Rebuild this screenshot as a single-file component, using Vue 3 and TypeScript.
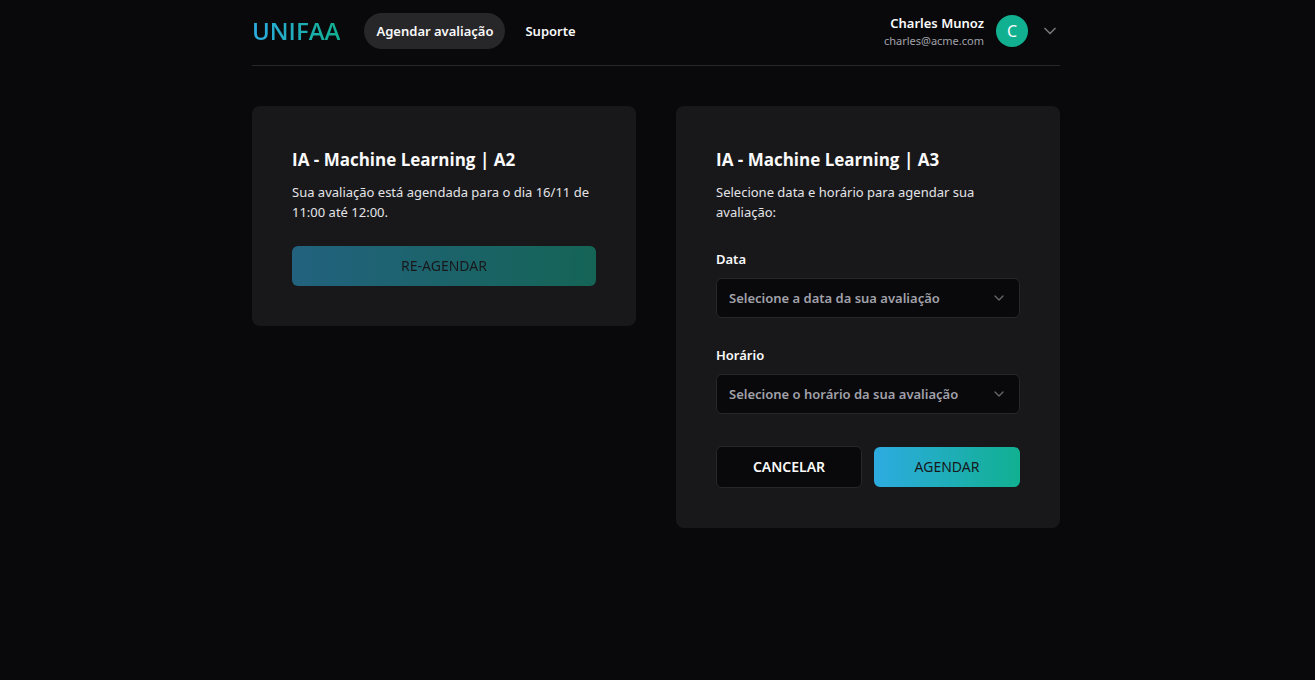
<script setup lang="ts">
import { ref } from 'vue'

interface SelectField {
  id: string
  label: string
  placeholder: string
  options: string[]
}

const fields: SelectField[] = [
  { id: 'data', label: 'Data', placeholder: 'Selecione a data da sua avaliação', options: [] },
  { id: 'horario', label: 'Horário', placeholder: 'Selecione o horário da sua avaliação', options: [] },
]

const selected = ref<Record<string, string>>({ data: '', horario: '' })
</script>

<template>
  <div class="page">
    <div class="container">
      <header class="header">
        <a class="logo" href="#">UNIFAA</a>
        <nav class="nav">
          <a class="nav-link active" href="#agendar">Agendar avaliação</a>
          <a class="nav-link" href="#suporte">Suporte</a>
        </nav>
        <button class="user" type="button">
          <span class="user-text">
            <span class="user-name">Charles Munoz</span>
            <span class="user-mail">charles@acme.com</span>
          </span>
          <span class="avatar">C</span>
          <svg class="user-chevron" viewBox="0 0 24 24" aria-hidden="true"><path d="m6 9 6 6 6-6" /></svg>
        </button>
      </header>

      <main class="cards">
        <section class="card">
          <h2 class="title">IA - Machine Learning | A2</h2>
          <p class="text">Sua avaliação está agendada para o dia 16/11 de 11:00 até 12:00.</p>
          <button class="btn primary" type="button" disabled>RE-AGENDAR</button>
        </section>

        <section class="card">
          <h2 class="title">IA - Machine Learning | A3</h2>
          <p class="text">Selecione data e horário para agendar sua avaliação:</p>
          <form class="form" @submit.prevent>
            <div v-for="field in fields" :key="field.id" class="field">
              <label class="label" :for="field.id">{{ field.label }}</label>
              <div class="select-wrap">
                <select :id="field.id" v-model="selected[field.id]" class="select">
                  <option value="" disabled>{{ field.placeholder }}</option>
                  <option v-for="option in field.options" :key="option" :value="option">{{ option }}</option>
                </select>
                <svg class="select-chevron" viewBox="0 0 24 24" aria-hidden="true"><path d="m6 9 6 6 6-6" /></svg>
              </div>
            </div>
            <div class="actions">
              <button class="btn outline" type="button">CANCELAR</button>
              <button class="btn primary" type="submit">AGENDAR</button>
            </div>
          </form>
        </section>
      </main>
    </div>
  </div>
</template>

<style>
body {
  background: #09090b;
}
</style>

<style scoped>
.page,
.page * {
  box-sizing: border-box;
}

.page {
  min-height: 100vh;
  padding-right: 3px;
  background: #09090b;
  color: #fafafa;
  font-family: "Segoe UI", "Noto Sans", "Open Sans", sans-serif;
  font-size: 13px;
  line-height: 20px;
}

.container {
  max-width: 808px;
  margin: 0 auto;
}

.header {
  display: flex;
  align-items: center;
  padding: 13px 0 16px;
  border-bottom: 1px solid #27272a;
}

.logo {
  margin-right: 24px;
  background: linear-gradient(90deg, #2dabe1, #11b091);
  background-clip: text;
  color: transparent;
  font-family: "Segoe UI", "Open Sans", sans-serif;
  font-size: 24px;
  font-weight: 600;
  line-height: 32px;
  text-decoration: none;
}

.nav {
  display: flex;
  gap: 8px;
}

.nav-link {
  padding: 8px 12px;
  border-radius: 18px;
  color: #fafafa;
  font-weight: 600;
  text-decoration: none;
}

.nav-link.active {
  background: #27272a;
}

.user {
  display: flex;
  align-items: center;
  gap: 12px;
  height: 36px;
  margin-left: auto;
  padding: 0;
  border: 0;
  background: none;
  color: inherit;
  font: inherit;
}

.user-text {
  display: flex;
  flex-direction: column;
  text-align: right;
}

.user-name {
  font-weight: 600;
}

.user-mail {
  color: #a1a1aa;
  font-size: 11px;
  line-height: 16px;
}

.avatar {
  width: 32px;
  height: 32px;
  border-radius: 50%;
  background: #11b091;
  font-size: 16px;
  line-height: 32px;
  text-align: center;
}

svg {
  fill: none;
  stroke: #a1a1aa;
  stroke-width: 2;
  stroke-linecap: round;
  stroke-linejoin: round;
}

.user-chevron {
  width: 20px;
  height: 20px;
  opacity: 0.7;
}

.cards {
  display: grid;
  grid-template-columns: repeat(2, minmax(0, 1fr));
  align-items: start;
  gap: 40px;
  padding: 40px 0;
}

.card {
  padding: 40px;
  border-radius: 8px;
  background: #18181b;
}

.title {
  margin: 0 0 8px;
  font-family: "Segoe UI", "Open Sans", sans-serif;
  font-size: 17px;
  font-weight: 700;
  line-height: 28px;
}

.text {
  margin: 0 0 24px;
  color: #e4e4e7;
}

.btn {
  display: block;
  width: 100%;
  height: 40px;
  padding: 0 16px;
  border: 0;
  border-radius: 6px;
  font: inherit;
  font-size: 14px;
}

.primary {
  background: linear-gradient(90deg, #2dabe1, #11b091);
  color: #18181b;
}

.primary:disabled {
  opacity: 0.5;
}

.outline {
  height: 42px;
  border: 1px solid #27272a;
  background: #09090b;
  color: #fafafa;
  font-weight: 600;
}

.form {
  display: flex;
  flex-direction: column;
  gap: 24px;
}

.field {
  display: flex;
  flex-direction: column;
  gap: 6px;
}

.label {
  font-weight: 600;
  line-height: 26px;
}

.select-wrap {
  position: relative;
}

.select {
  display: block;
  width: 100%;
  height: 40px;
  padding: 0 36px 0 12px;
  border: 1px solid #27272a;
  border-radius: 6px;
  appearance: none;
  background: #09090b;
  color: #a1a1aa;
  font: inherit;
  font-weight: 600;
}

.select-chevron {
  position: absolute;
  top: 12px;
  right: 13px;
  width: 16px;
  height: 16px;
  opacity: 0.6;
  pointer-events: none;
}

.actions {
  display: grid;
  grid-template-columns: 1fr 1fr;
  align-items: center;
  gap: 12px;
  padding-top: 8px;
}
</style>
